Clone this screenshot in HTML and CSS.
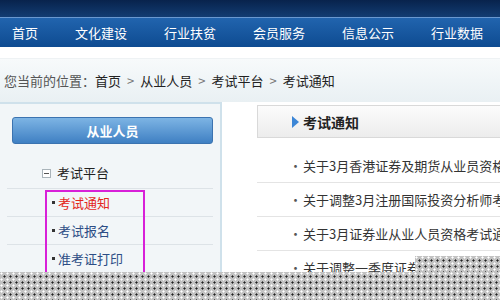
FILE: index.html
```html
<!DOCTYPE html>
<html lang="zh-CN">
  <head>
    <meta charset="UTF-8" />
    <title>考试通知</title>
    <link rel="stylesheet" href="styles.css">
  </head>
  <body>
    <div class="topbar"></div>
    <ul class="nav">
      <li>首页</li>
      <li>文化建设</li>
      <li>行业扶贫</li>
      <li>会员服务</li>
      <li>信息公示</li>
      <li>行业数据</li>
    </ul>

    <div class="crumb">
      您当前的位置：<b>首页</b><span class="sep">&gt;</span><b>从业人员</b><span class="sep">&gt;</span><b>考试平台</b><span class="sep">&gt;</span><b>考试通知</b>
    </div>

    <div class="main">
      <div class="sidebar">
        <div class="side-btn">从业人员</div>
        <div class="side-group"><span class="minus"></span>考试平台</div>
        <ul class="side-list">
          <li class="active"><span class="dot"></span>考试通知</li>
          <li><span class="dot"></span>考试报名</li>
          <li><span class="dot"></span>准考证打印</li>
        </ul>
        <div class="mark"></div>
      </div>

      <div class="content">
        <div class="panel-head"><span class="arrow"></span>考试通知</div>
        <ul class="news">
          <li>关于3月香港证券及期货从业员资格考试安排的通知</li>
          <li>关于调整3月注册国际投资分析师考试的通知</li>
          <li>关于3月证券业从业人员资格考试通知</li>
          <li>关于调整一季度证券业从业人员考试的通知</li>
        </ul>
      </div>
    </div>

    <!-- transparent area of the original capture -->
    <div class="blank blank-side"></div>
    <div class="blank blank-bottom"></div>
  </body>
</html>
```

FILE: styles.css
```css
body {
  margin: 0;
  width: 500px;
  height: 300px;
  overflow: hidden;
  position: relative;
  font-family: "Noto Sans CJK SC", "Noto Sans", sans-serif;
  font-size: 13px;
  color: #333;
  background: #fff;
}

ul {
  list-style: none;
  margin: 0;
  padding: 0;
}

.topbar {
  height: 17px;
  background: linear-gradient(#08234c, #123c72);
}

.nav {
  display: flex;
  gap: 37px;
  height: 29px;
  padding-left: 12px;
  border-top: 1px solid #6a98cf;
  background: linear-gradient(#2164ae, #0e4b91);
  color: #fff;
  line-height: 30px;
}

.crumb {
  margin-top: 11px;
  height: 43px;
  padding-left: 4px;
  line-height: 43px;
  border-top: 1px solid #eef2f4;
  background: linear-gradient(#f7fafb, #e9f0f3);
  color: #555;
}

.crumb b {
  font-weight: normal;
  color: #222;
}

.crumb .sep {
  margin: 0 6px;
  color: #777;
}

.main {
  display: flex;
}

.sidebar {
  position: relative;
  flex-shrink: 0;
  width: 220px;
  height: 200px;
  border-top: 2px solid #cfe1eb;
  border-right: 2px solid #cfe1eb;
  background: #f2f6f8;
}

.side-btn {
  margin: 13px 0 0 12px;
  width: 199px;
  height: 25px;
  line-height: 25px;
  border: 1px solid #3b73b0;
  border-radius: 3px;
  background: linear-gradient(#7db4e4, #3f80c3);
  color: #fff;
  font-weight: bold;
  text-align: center;
}

.side-group {
  display: flex;
  align-items: center;
  gap: 6px;
  margin: 14px 7px 0;
  padding-left: 35px;
  height: 30px;
  line-height: 28px;
  border-bottom: 1px solid #dde3e7;
  color: #222;
}

.minus {
  position: relative;
  width: 7px;
  height: 7px;
  border: 1px solid #aab4ba;
  background: #fff;
}

.minus::after {
  content: "";
  position: absolute;
  left: 1px;
  top: 3px;
  width: 5px;
  height: 1px;
  background: #555;
}

.side-list li {
  display: flex;
  align-items: center;
  gap: 3px;
  height: 27px;
  margin: 0 7px;
  padding-left: 45px;
  border-bottom: 1px solid #dde3e7;
  color: #2c4d85;
}

.side-list li.active {
  color: #e3261c;
}

.dot {
  width: 3px;
  height: 3px;
  background: #333;
}

.mark {
  position: absolute;
  left: 45px;
  top: 86px;
  width: 96px;
  height: 110px;
  border: 2px solid #d820d8;
}

.content {
  flex: 1;
  min-width: 0;
  margin-left: 35px;
  padding-top: 3px;
}

.panel-head {
  display: flex;
  align-items: center;
  gap: 4px;
  height: 31px;
  padding-left: 34px;
  border: 1px solid #d9d9d9;
  border-right: none;
  background: linear-gradient(#fcfcfc, #ececec);
  font-size: 14px;
  font-weight: bold;
  color: #222;
}

.arrow {
  width: 0;
  height: 0;
  border-top: 6px solid transparent;
  border-bottom: 6px solid transparent;
  border-left: 7px solid #3c86d6;
}

.news {
  margin-top: 11px;
}

.news li {
  height: 33px;
  line-height: 33px;
  padding-left: 32px;
  white-space: nowrap;
  overflow: hidden;
  border-bottom: 1px solid #e4e4e4;
  color: #333;
}

.news li::before {
  content: "·";
  display: inline-block;
  width: 14px;
  color: #555;
}

.blank {
  position: absolute;
  background-color: #c2c2c2;
  background-image:
    radial-gradient(circle at 1.5px 1.5px, #fff 0.9px, transparent 1.2px),
    radial-gradient(circle at 4.5px 4.5px, #222 0.9px, transparent 1.2px);
  background-size: 6px 6px;
}

.blank-side {
  left: 415px;
  top: 256px;
  width: 85px;
  height: 16px;
}

.blank-bottom {
  left: 0;
  top: 272px;
  width: 500px;
  height: 28px;
}
```
